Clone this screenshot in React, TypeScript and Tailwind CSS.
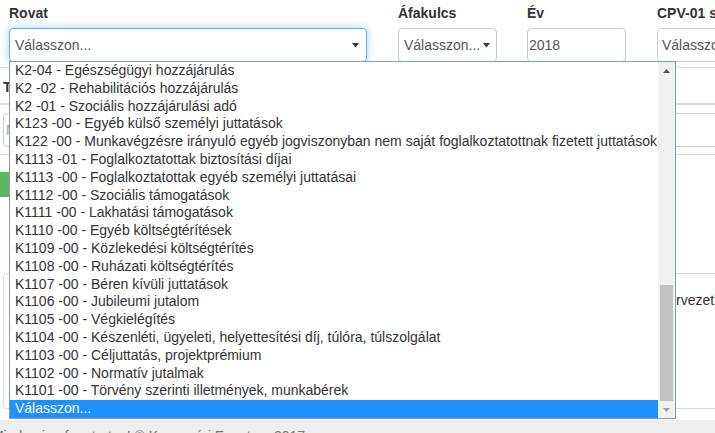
import React from "react";

const items = [
  "K2-04 - Egészségügyi hozzájárulás",
  "K2 -02 - Rehabilitációs hozzájárulás",
  "K2 -01 - Szociális hozzájárulási adó",
  "K123 -00 - Egyéb külső személyi juttatások",
  "K122 -00 - Munkavégzésre irányuló egyéb jogviszonyban nem saját foglalkoztatottnak fizetett juttatások",
  "K1113 -01 - Foglalkoztatottak biztosítási díjai",
  "K1113 -00 - Foglalkoztatottak egyéb személyi juttatásai",
  "K1112 -00 - Szociális támogatások",
  "K1111 -00 - Lakhatási támogatások",
  "K1110 -00 - Egyéb költségtérítések",
  "K1109 -00 - Közlekedési költségtérítés",
  "K1108 -00 - Ruházati költségtérítés",
  "K1107 -00 - Béren kívüli juttatások",
  "K1106 -00 - Jubileumi jutalom",
  "K1105 -00 - Végkielégítés",
  "K1104 -00 - Készenléti, ügyeleti, helyettesítési díj, túlóra, túlszolgálat",
  "K1103 -00 - Céljuttatás, projektprémium",
  "K1102 -00 - Normatív jutalmak",
  "K1101 -00 - Törvény szerinti illetmények, munkabérek",
];

function Caret() {
  return (
    <svg width="7" height="5" viewBox="0 0 7 5" className="shrink-0">
      <polygon points="0,0 7,0 3.5,4.5" fill="#3a3a3a" />
    </svg>
  );
}

export default function App() {
  return (
    <div
      className="relative w-[715px] h-[433px] overflow-hidden bg-white text-[14px] text-[#333]"
      style={{ fontFamily: '"Liberation Sans", Arial, sans-serif' }}
    >
      {/* Filter row */}
      <div className="flex pt-[3px] pl-[9px]">
        <div className="w-[358px] shrink-0">
          <div className="font-bold leading-[20px] mb-[5px]">Rovat</div>
          <div className="h-[34px] flex items-center justify-between pl-[5px] pr-[7px] border border-[#66afe9] rounded-[4px] shadow-[0_0_8px_rgba(102,175,233,0.6)] text-[#555]">
            <span>Válasszon...</span>
            <Caret />
          </div>
        </div>
        <div className="w-[99px] shrink-0 ml-[31px]">
          <div className="font-bold leading-[20px] mb-[5px]">Áfakulcs</div>
          <div className="h-[34px] flex items-center justify-between pl-[5px] pr-[6px] border border-[#ccc] rounded-[4px] text-[#555]">
            <span>Válasszon...</span>
            <Caret />
          </div>
        </div>
        <div className="w-[99px] shrink-0 ml-[30px]">
          <div className="font-bold leading-[20px] mb-[5px]">Év</div>
          <div className="h-[34px] flex items-center pl-[1px] border border-[#ccc] rounded-[4px] text-[#555]">
            2018
          </div>
        </div>
        <div className="w-[140px] shrink-0 ml-[31px]">
          <div className="font-bold leading-[20px] mb-[5px] whitespace-nowrap">CPV-01 szám</div>
          <div className="h-[34px] flex items-center pl-[4px] border border-[#ccc] rounded-[4px] text-[#555]">
            Válasszon...
          </div>
        </div>
      </div>

      {/* Content behind the open list */}
      <div className="mt-[5px] border-t border-[#ddd]">
        <div className="h-[35px] pl-[3px] pt-[9px] leading-[20px] font-bold">Tétel</div>
        <div className="border-t-2 border-[#ddd] pt-[8px] pl-[3px] pr-0">
          <div className="h-[34px] w-[740px] flex items-center pl-[2px] border border-[#ccc] rounded-[4px] text-[#999]">
            Név
          </div>
        </div>
        <div className="mt-[7px] border-t border-[#ddd]" />
        <div className="pt-[17px]">
          <div className="w-[110px] h-[25px] -ml-[10px] bg-[#5cb85c] rounded-[4px]" />
        </div>
        <div className="mt-[76px] ml-[3px] w-[740px] h-[136px] border border-[#ddd] rounded-[4px] flex">
          <div className="w-[648px] shrink-0" />
          <div className="pt-[16px] leading-[20px]">Szervezet</div>
        </div>
      </div>
      <div className="mt-[11px] h-[20px] bg-[#eee] -ml-[8px] pt-[6px] leading-[20px] text-[#777]">
        Minden jog fenntartva! © Kaposvári Egyetem 2017
      </div>

      {/* Open select list */}
      <div className="absolute left-[9px] top-[61px] w-[667px] h-[358px] border border-[#7f9db9] bg-white flex">
        <div className="w-[648px] shrink-0 overflow-hidden">
          {items.map((t) => (
            <div key={t} className="h-[17.8px] leading-[17.8px] pl-[5px] whitespace-nowrap text-[#333]">
              {t}
            </div>
          ))}
          <div className="h-[17.8px] leading-[17.8px] pl-[5px] bg-[#1e90ff] text-white">Válasszon...</div>
        </div>
        <div className="w-[17px] bg-[#f1f1f1] flex flex-col">
          <div className="h-[17px] flex items-center justify-center">
            <svg width="7" height="4" viewBox="0 0 7 4">
              <polygon points="3.5,0 7,4 0,4" fill="#505050" />
            </svg>
          </div>
          <div className="h-[206px]" />
          <div className="h-[116px] mx-[2px] bg-[#c1c1c1]" />
          <div className="flex-1" />
          <div className="h-[17px] flex items-center justify-center">
            <svg width="7" height="4" viewBox="0 0 7 4">
              <polygon points="0,0 7,0 3.5,4" fill="#a3a3a3" />
            </svg>
          </div>
        </div>
      </div>
    </div>
  );
}
